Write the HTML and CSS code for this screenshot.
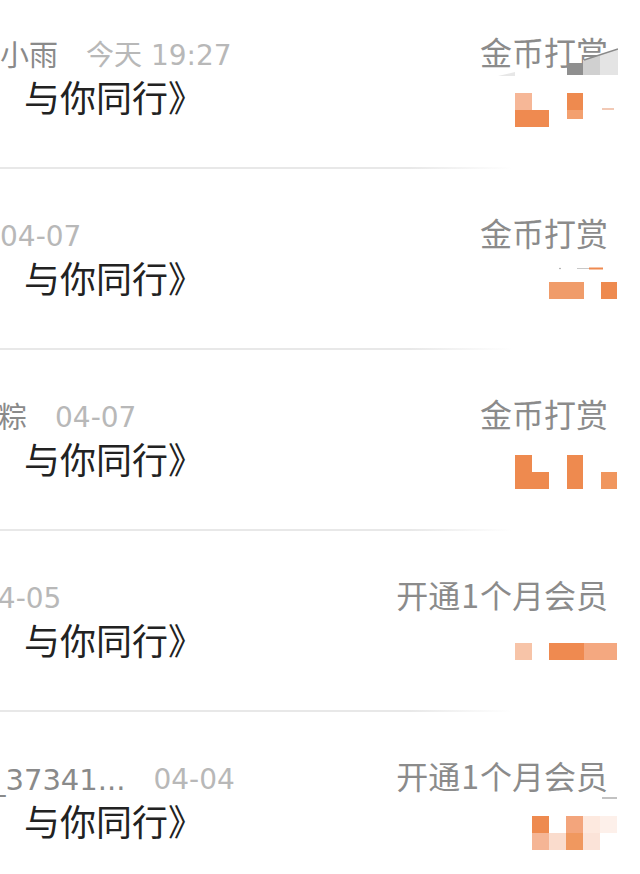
FILE: index.html
```html
<!DOCTYPE html>
<html lang="zh-CN">
<head>
<meta charset="utf-8">
<title>打赏记录</title>
<link rel="stylesheet" href="styles.css">
</head>
<body>
<ul class="list">
  <li class="item">
    <div class="main">
      <div class="meta shift-1"><span class="name">小雨</span><span class="time">今天 19:27</span></div>
      <div class="title">与你同行》</div>
    </div>
    <div class="side">
      <div class="label">金币打赏</div>
      <svg class="smudge" width="120" height="28" viewBox="0 0 120 28">
        <polygon points="0,28 17,24 17,28" fill="#e7e7e7"/>
        <rect x="69" y="15" width="16" height="12" fill="#8f8f8f"/>
        <polygon points="85,12 102,7 102,27 85,27" fill="#d0d0d0"/>
        <polygon points="102,7 120,1 120,27 102,27" fill="#e4e4e4"/>
        <line x1="86" y1="12" x2="120" y2="1" stroke="#8a8a8a" stroke-width="1.5"/>
      </svg>
      <svg class="mosaic" width="102" height="58" viewBox="0 0 102 58">
        <rect x="0" y="21" width="17" height="17" fill="#f6b797"/>
        <rect x="0" y="38" width="34" height="17" fill="#ef8a50"/>
        <rect x="52" y="21" width="16" height="17" fill="#ee8a4f"/>
        <rect x="52" y="38" width="16" height="9" fill="#f3a06f"/>
        <rect x="87" y="36" width="12" height="2" fill="#eaa583" opacity="0.6"/>
      </svg>
    </div>
  </li>
  <li class="item">
    <div class="main">
      <div class="meta shift-2"><span class="time">04-07</span></div>
      <div class="title">与你同行》</div>
    </div>
    <div class="side">
      <div class="label">金币打赏</div>
      <svg class="mosaic" width="102" height="58" viewBox="0 0 102 58">
        <circle cx="45" cy="15.5" r="0.8" fill="#9a9a9a"/>
        <rect x="62" y="15" width="12" height="1" fill="#c8c8c8"/>
        <rect x="74" y="14.5" width="14" height="2" fill="#ef8a50"/>
        <rect x="34" y="29" width="35" height="17" fill="#f09c6a"/>
        <rect x="86" y="29" width="16" height="17" fill="#ee8a4f"/>
      </svg>
    </div>
  </li>
  <li class="item">
    <div class="main">
      <div class="meta shift-3"><span class="name">粽</span><span class="time">04-07</span></div>
      <div class="title">与你同行》</div>
    </div>
    <div class="side">
      <div class="label">金币打赏</div>
      <svg class="mosaic" width="102" height="58" viewBox="0 0 102 58">
        <rect x="0" y="21" width="17" height="34" fill="#ee8a4f"/>
        <rect x="17" y="38" width="17" height="17" fill="#ee8a4f"/>
        <rect x="52" y="21" width="16" height="34" fill="#ee8a4f"/>
        <rect x="86" y="38" width="16" height="17" fill="#f0965e"/>
      </svg>
    </div>
  </li>
  <li class="item">
    <div class="main">
      <div class="meta shift-4"><span class="time">04-05</span></div>
      <div class="title">与你同行》</div>
    </div>
    <div class="side">
      <div class="label">开通<span class="num">1</span>个月会员</div>
      <svg class="mosaic" width="102" height="58" viewBox="0 0 102 58">
        <rect x="0" y="28" width="17" height="17" fill="#f7c4a8"/>
        <rect x="34" y="28" width="35" height="17" fill="#ef8a50"/>
        <rect x="69" y="28" width="33" height="17" fill="#f4a880"/>
      </svg>
    </div>
  </li>
  <li class="item">
    <div class="main">
      <div class="meta shift-5"><span class="name">_37341...</span><span class="time">04-04</span></div>
      <div class="title">与你同行》</div>
    </div>
    <div class="side">
      <div class="label">开通<span class="num">1</span>个月会员</div>
      <svg class="mosaic" width="102" height="58" viewBox="0 0 102 58">
        <rect x="87" y="1" width="15" height="2" fill="#9a9a9a" opacity="0.6"/>
        <rect x="17" y="20" width="17" height="17" fill="#ee8a4f"/>
        <rect x="17" y="37" width="17" height="17" fill="#f5b595"/>
        <rect x="34" y="37" width="17" height="17" fill="#fadccd"/>
        <rect x="51" y="20" width="17" height="17" fill="#f3a57c"/>
        <rect x="51" y="37" width="17" height="17" fill="#f0985f"/>
        <rect x="68" y="20" width="17" height="17" fill="#fde9df"/>
        <rect x="68" y="37" width="17" height="17" fill="#fbe3d8"/>
        <rect x="85" y="20" width="17" height="17" fill="#fdf0ea"/>
      </svg>
    </div>
  </li>
</ul>
</body>
</html>
```

FILE: styles.css
```css
html, body {
  margin: 0;
  padding: 0;
  background: #ffffff;
  overflow: hidden;
  width: 640px;
  height: 874px;
}

.list {
  list-style: none;
  margin: -12px 0 0 0;
  padding: 0;
  font-family: "Noto Sans CJK SC", sans-serif;
}

.item {
  box-sizing: border-box;
  height: 181px;
  display: flex;
  justify-content: space-between;
  border-bottom: 2px solid #e9e9e9;
  border-image: linear-gradient(to right, #e8e8e8 0%, #e8e8e8 64%, rgba(236, 236, 236, 0) 80%) 1;
}

.main {
  display: flex;
  flex-direction: column;
  padding-top: 50px;
  min-width: 0;
}

.meta {
  display: flex;
  gap: 28px;
  height: 36px;
  line-height: 36px;
  white-space: nowrap;
  font-family: "DejaVu Sans", "Noto Sans CJK SC", sans-serif;
}

.name {
  font-size: 29px;
  color: #8a8a8a;
}

.time {
  font-size: 28px;
  color: #b8b8b8;
}

.shift-1 { margin-left: 0; }
.shift-2 { margin-left: 0; }
.shift-3 { margin-left: -2px; }
.shift-4 { margin-left: -20px; }
.shift-5 { margin-left: -9px; }

.title {
  margin-top: 2px;
  padding-left: 24px;
  font-size: 36px;
  line-height: 40px;
  color: #222222;
  white-space: nowrap;
}

.side {
  position: relative;
  display: flex;
  flex-direction: column;
  align-items: flex-end;
  padding-top: 43px;
  padding-right: 23px;
}

.label {
  margin-right: 9px;
  font-size: 32px;
  line-height: 40px;
  color: #8b8b8b;
  white-space: nowrap;
}

.num {
  margin: 0 1px;
}

.mosaic {
  display: block;
  margin-top: 1px;
}

.smudge {
  position: absolute;
  top: 60px;
  right: 22px;
}
```
